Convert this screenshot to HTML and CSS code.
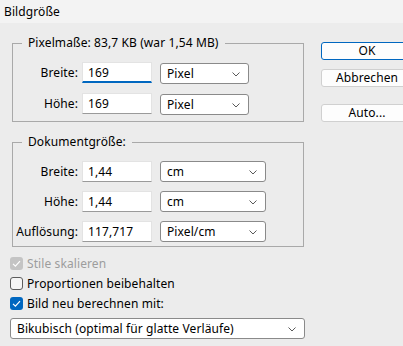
FILE: index.html
```html
<!DOCTYPE html>
<html lang="de">
<head>
<meta charset="utf-8">
<title>Bildgröße</title>
<link rel="stylesheet" href="styles.css">
</head>
<body>
<div class="titlebar">Bildgröße</div>
<div class="dialog">
  <div class="left">
    <fieldset class="group group-pixel">
      <legend>Pixelmaße: 83,7 KB (war 1,54 MB)</legend>
      <div class="rows rows-pixel">
        <div class="row">
          <span class="label">Breite:</span>
          <span class="input focused">169</span>
          <span class="select sel-short">Pixel<svg class="chev" viewBox="0 0 8 5"><path d="M0.5 0.5 L4 4 L7.5 0.5" /></svg></span>
        </div>
        <div class="row">
          <span class="label">Höhe:</span>
          <span class="input">169</span>
          <span class="select sel-short">Pixel<svg class="chev" viewBox="0 0 8 5"><path d="M0.5 0.5 L4 4 L7.5 0.5" /></svg></span>
        </div>
      </div>
    </fieldset>
    <fieldset class="group group-doc">
      <legend>Dokumentgröße:</legend>
      <div class="rows rows-doc">
        <div class="row">
          <span class="label">Breite:</span>
          <span class="input">1,44</span>
          <span class="select sel-long">cm<svg class="chev" viewBox="0 0 8 5"><path d="M0.5 0.5 L4 4 L7.5 0.5" /></svg></span>
        </div>
        <div class="row">
          <span class="label">Höhe:</span>
          <span class="input">1,44</span>
          <span class="select sel-long">cm<svg class="chev" viewBox="0 0 8 5"><path d="M0.5 0.5 L4 4 L7.5 0.5" /></svg></span>
        </div>
        <div class="row">
          <span class="label">Auflösung:</span>
          <span class="input">117,717</span>
          <span class="select sel-long">Pixel/cm<svg class="chev" viewBox="0 0 8 5"><path d="M0.5 0.5 L4 4 L7.5 0.5" /></svg></span>
        </div>
      </div>
    </fieldset>
    <div class="checks">
      <div class="check disabled">
        <span class="box box-disabled"><svg viewBox="0 0 13 13"><path d="M3 6.8 L5.4 9.2 L10 4.2" /></svg></span>
        <span>Stile skalieren</span>
      </div>
      <div class="check">
        <span class="box box-off"></span>
        <span>Proportionen beibehalten</span>
      </div>
      <div class="check">
        <span class="box box-on"><svg viewBox="0 0 13 13"><path d="M3 6.8 L5.4 9.2 L10 4.2" /></svg></span>
        <span>Bild neu berechnen mit:</span>
      </div>
    </div>
    <span class="select sel-wide">Bikubisch (optimal für glatte Verläufe)<svg class="chev" viewBox="0 0 8 5"><path d="M0.5 0.5 L4 4 L7.5 0.5" /></svg></span>
  </div>
  <div class="right">
    <button class="btn btn-default">OK</button>
    <button class="btn">Abbrechen</button>
    <button class="btn btn-auto">Auto...</button>
  </div>
</div>
</body>
</html>
```
FILE: styles.css
```css
* { box-sizing: border-box; }
html, body {
  margin: 0;
  padding: 0;
  width: 403px;
  height: 346px;
  overflow: hidden;
  background: #ececec;
  font-family: "Noto Sans", "Open Sans", sans-serif;
  font-size: 12px;
  letter-spacing: 0.1px;
  color: #000;
}
.titlebar {
  height: 23px;
  background: #f3f3f3;
  padding: 4px 0 0 4px;
  line-height: 16px;
}
.dialog {
  display: flex;
  padding-left: 10px;
}
.left {
  width: 296px;
  display: flex;
  flex-direction: column;
}
.group {
  margin: 12px 0 0 2px;
  padding: 0;
  width: 292px;
  border: 1px solid #a9a9a9;
  min-width: 0;
}
.group legend {
  margin-left: 9px;
  padding: 0 6px;
  line-height: 16px;
}
.rows {
  display: flex;
  flex-direction: column;
}
.rows-pixel { gap: 10px; padding: 11px 0 7px 0; }
.rows-doc { gap: 9px; padding: 11px 0 4px 0; }
.row {
  display: flex;
  align-items: flex-start;
  height: 21px;
}
.label {
  width: 65px;
  text-align: right;
  line-height: 21px;
  margin-right: 4px;
}
.input {
  width: 70px;
  height: 21px;
  background: #fff;
  border: 1px solid #e3e3e3;
  border-bottom-color: #9a9a9a;
  padding-left: 5px;
  line-height: 19px;
  margin-right: 8px;
}
.input.focused {
  border-bottom: 2px solid #0067c0;
}
.select {
  position: relative;
  height: 21px;
  background: #fff;
  border: 1px solid #8a8a8a;
  border-radius: 3px;
  padding-left: 6px;
  line-height: 19px;
  display: block;
}
.sel-short { width: 89px; margin-top: 1px; }
.sel-long { width: 106px; }
.sel-wide { width: 295px; margin-top: 8px; }
.chev {
  position: absolute;
  right: 8px;
  top: 8px;
  width: 8px;
  height: 5px;
  fill: none;
  stroke: #5a5a5a;
  stroke-width: 1;
}
.checks {
  display: flex;
  flex-direction: column;
  gap: 7px;
  margin-top: 10px;
}
.check {
  display: flex;
  align-items: center;
  gap: 4px;
  height: 13px;
  line-height: 16px;
}
.check.disabled { color: #9d9d9d; }
.box {
  width: 13px;
  height: 13px;
  border-radius: 3px;
  display: block;
  flex: none;
}
.box svg {
  width: 13px;
  height: 13px;
  display: block;
  fill: none;
  stroke: #fff;
  stroke-width: 1.2;
}
.box-disabled { background: #c4c4c4; }
.box-off { background: #f5f5f5; border: 1px solid #5c5c5c; }
.box-on { background: #0067c0; }
.right {
  margin-left: 16px;
  display: flex;
  flex-direction: column;
  padding-top: 19px;
}
.btn {
  width: 92px;
  height: 18px;
  font: inherit;
  letter-spacing: inherit;
  background: #fdfdfd;
  border: 1px solid #d0d0d0;
  border-radius: 3px;
  padding: 0;
  line-height: 16px;
  color: #000;
}
.btn-default { border-color: #0067c0; }
.btn + .btn { margin-top: 9px; }
.btn + .btn-auto { margin-top: 17px; }
```
